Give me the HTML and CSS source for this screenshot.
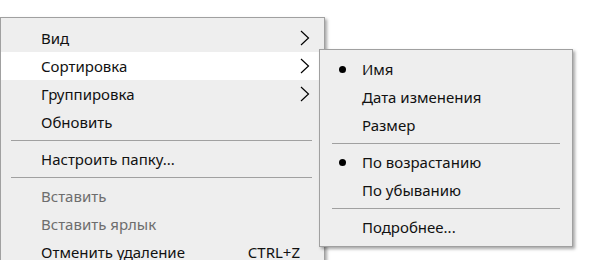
FILE: index.html
```html
<!DOCTYPE html>
<html lang="ru">
<head>
  <meta charset="UTF-8">
  <title>Контекстное меню</title>
  <link rel="stylesheet" href="styles.css">
</head>
<body>

  <div class="menu main-menu">
    <div class="item">Вид <svg class="arrow" width="10" height="16" viewBox="0 0 10 16"><polyline points="1,1 8.5,8 1,15"/></svg></div>
    <div class="item hover">Сортировка <svg class="arrow" width="10" height="16" viewBox="0 0 10 16"><polyline points="1,1 8.5,8 1,15"/></svg></div>
    <div class="item">Группировка <svg class="arrow" width="10" height="16" viewBox="0 0 10 16"><polyline points="1,1 8.5,8 1,15"/></svg></div>
    <div class="item">Обновить</div>
    <div class="sep"></div>
    <div class="item">Настроить папку...</div>
    <div class="sep"></div>
    <div class="item disabled">Вставить</div>
    <div class="item disabled">Вставить ярлык</div>
    <div class="item">Отменить удаление <span class="shortcut">CTRL+Z</span></div>
  </div>

  <div class="menu sub-menu">
    <div class="item checked">Имя</div>
    <div class="item">Дата изменения</div>
    <div class="item">Размер</div>
    <div class="sep"></div>
    <div class="item checked">По возрастанию</div>
    <div class="item">По убыванию</div>
    <div class="sep"></div>
    <div class="item">Подробнее...</div>
  </div>

</body>
</html>
```

FILE: styles.css
```css
body {
  margin: 0;
  background: #fff;
  font-family: 'Segoe UI', 'Noto Sans', sans-serif;
  font-size: 15px;
  color: #111;
  position: relative;
  height: 260px;
  overflow: hidden;
}

.menu {
  background: #eeeeee;
  border: 1px solid #a0a0a0;
  box-shadow: 2px 2px 3px rgba(0, 0, 0, 0.35);
  box-sizing: border-box;
}

.main-menu {
  margin-top: 17px;
  width: 325px;
  padding: 6px 0 10px;
}

.sub-menu {
  position: absolute;
  left: 319px;
  top: 49px;
  width: 254px;
  height: 198px;
  padding: 5px 0 3px;
}

.item {
  height: 28px;
  line-height: 28px;
  padding-left: 40px;
  padding-right: 24px;
  display: flex;
  align-items: center;
  white-space: nowrap;
}

.sub-menu .item {
  padding-left: 42px;
  position: relative;
}

.item.hover {
  background: #fff;
}

.item.disabled {
  color: #6d6d6d;
}

.arrow {
  margin-left: auto;
  margin-right: -10px;
  fill: none;
  stroke: #000;
  stroke-width: 1.2;
}

.shortcut {
  margin-left: auto;
}

.checked::before {
  content: "";
  position: absolute;
  left: 19px;
  top: 11px;
  width: 7px;
  height: 7px;
  border-radius: 50%;
  background: #000;
}

.sep {
  height: 1px;
  background: #a0a0a0;
  margin: 4px 12px 4px 10px;
}

.sub-menu .sep {
  margin: 4px 12px;
}
```
